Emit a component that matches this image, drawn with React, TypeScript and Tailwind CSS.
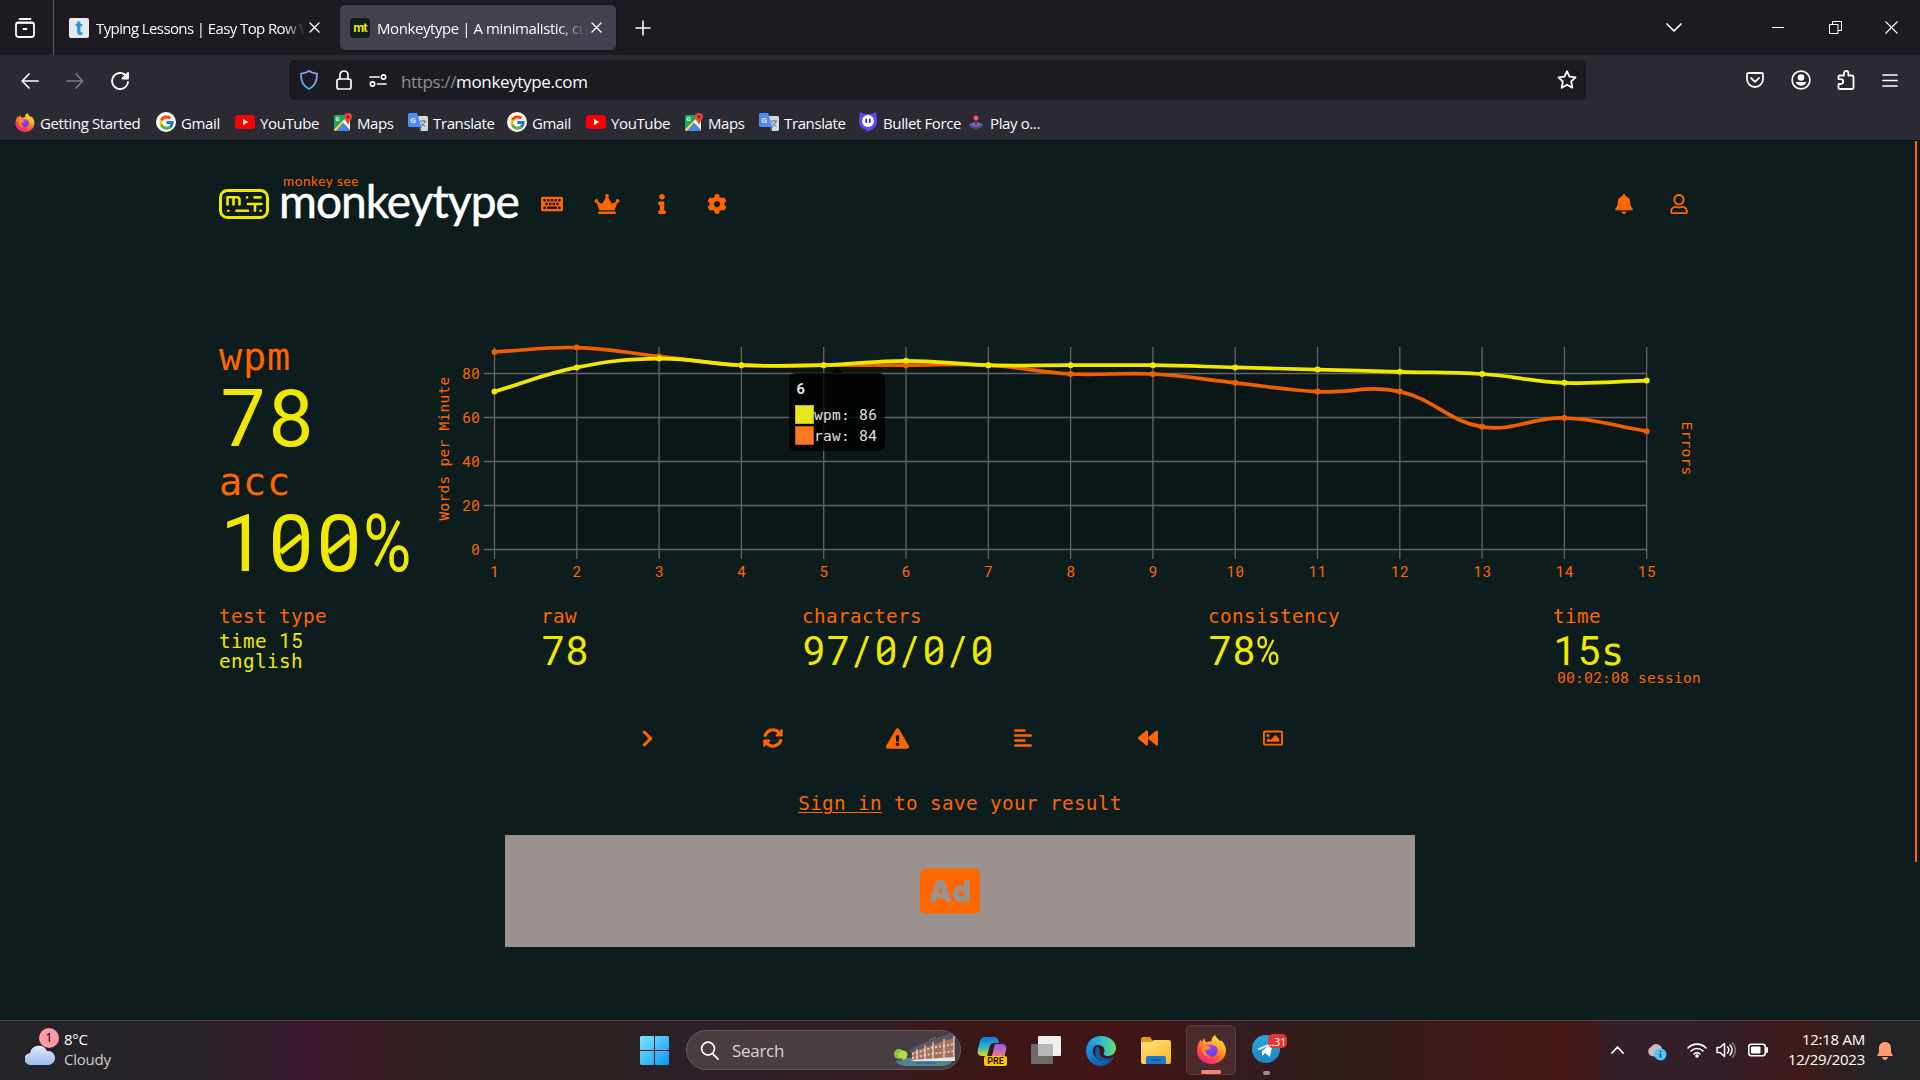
import React from "react";
import {
  FaKeyboard, FaCrown, FaInfo, FaCog, FaBell, FaRegUser, FaChevronRight, FaSyncAlt,
  FaExclamationTriangle, FaAlignLeft, FaBackward, FaRegImage, FaAd,
} from "react-icons/fa";
import { FcGoogle } from "react-icons/fc";

/* ---------- monospace text with slashed zeros ---------- */

function Mono({ text }: { text: string }) {
  const parts = text.match(/[0-9/%]|[^0-9/%]+/g) ?? [];
  return (
    <>
      {parts.map((p, i) =>
        /^[0-9/%]$/.test(p) ? (
          <span key={i} className="relative inline-flex w-[0.6em] justify-center font-['Roboto',sans-serif] leading-[0]">
            {p === "%" ? <span className="scale-x-[0.82]">%</span> : p}
            {p === "0" && (
              <svg viewBox="0 0 60 72" className="absolute bottom-[-0.35em] left-0 h-[0.72em] w-[0.6em] overflow-visible" fill="none">
                <path d="M17 48L43 27" stroke="currentColor" strokeWidth="7" />
              </svg>
            )}
          </span>
        ) : (
          <span key={i} className="font-['DejaVu_Sans_Mono',monospace] text-[0.965em] leading-[0] tracking-[0.0197em]">{p}</span>
        )
      )}
    </>
  );
}

/* ---------- browser icons ---------- */

function FirefoxLogo({ className }: { className: string }) {
  return (
    <svg viewBox="0 0 32 32" className={className}>
      <defs>
        <linearGradient id="ffa" x1="0.8" y1="0" x2="0.2" y2="1">
          <stop offset="0" stopColor="#fff04a" />
          <stop offset="0.4" stopColor="#ff9a25" />
          <stop offset="0.7" stopColor="#ff4a45" />
          <stop offset="1" stopColor="#e8159a" />
        </linearGradient>
        <linearGradient id="ffb" x1="0.3" y1="0" x2="0.7" y2="1">
          <stop offset="0" stopColor="#a34bff" />
          <stop offset="1" stopColor="#5b3fe0" />
        </linearGradient>
      </defs>
      <path d="M20 0c1 3 4 5 6 7l1-1c3 3 5 7 5 11 0 8-7 15-16 15S0 26 0 17c0-5 2-9 4-12l1 3 3-5c0 2 1 4 3 5 2-1 4-1 5-1 0-3 1-5 4-7z" fill="url(#ffa)" />
      <path d="M10 12c3-2 10-2 12 2 2 5-1 10-6 10-5 0-8-4-7-8 2 1 5 0 6-2-2 0-4-1-5-2z" fill="url(#ffb)" />
      <path d="M8 9c1 2 4 4 7 4-1 3-4 3-6 3 0 4 3 7 7 8-6 1-11-4-11-9 0-2 1-5 3-6z" fill="#ff8a20" />
    </svg>
  );
}

function GoogleIcon() {
  return (
    <span className="flex h-5 w-5 items-center justify-center rounded-full bg-white">
      <FcGoogle className="h-[17px] w-[17px]" />
    </span>
  );
}

function YouTubeIcon() {
  return (
    <svg viewBox="0 0 20 14" className="h-[14px] w-5">
      <rect width="20" height="14" rx="3.5" fill="#f00" />
      <path d="M8 4l5.2 3L8 10z" fill="#fff" />
    </svg>
  );
}

function MapsIcon() {
  return (
    <svg viewBox="0 0 20 20" className="h-5 w-5">
      <rect x="1" y="3" width="16" height="16" rx="1.5" fill="#1fa463" />
      <path d="M1 17L15 4l2 3v10L9 10z" fill="#eceff1" />
      <path d="M1 17.5L9.5 9 11 10.500 3 19H2z" fill="#fdd835" />
      <path d="M3 19l7-8 7 8z" fill="#4285f4" />
      <path d="M10 10l1-1 6 7v2z" fill="#fff" />
      <text x="2.500" y="8.500" fontSize="6" fontFamily="Roboto" fontWeight="700" fill="#fff">G</text>
      <path d="M15 1a4 4 0 0 1 4 4c0 3-3 4-4 8-1-4-4-5-4-8a4 4 0 0 1 4-4z" fill="#ea4335" />
      <circle cx="15" cy="5" r="1.4" fill="#7b1a12" />
    </svg>
  );
}

function TranslateIcon() {
  return (
    <svg viewBox="0 0 20 20" className="h-5 w-5">
      <path d="M8 4h10.500A1.500 1.500 0 0 1 20 5.500v12a1.500 1.500 0 0 1-1.500 1.500H13z" fill="#d5d9dc" />
      <path d="M12 9h6M15 8v1M17 9c-.5 3-2.500 4.500-4 5.500M13.500 10.500c1 2 2.500 3.500 4 4" stroke="#607080" strokeWidth="1" fill="none" />
      <path d="M1.500 1H9l4.500 14h-12A1.500 1.500 0 0 1 0 13.500v-11A1.500 1.500 0 0 1 1.500 1z" fill="#4d8cf5" />
      <path d="M10.500 15h3L12 19z" fill="#2f5fc4" />
      <text x="2.600" y="11" fontSize="8" fontFamily="Roboto" fontWeight="700" fill="#e3edff">G</text>
    </svg>
  );
}

function BulletForceIcon() {
  return (
    <svg viewBox="0 0 18 20" className="h-5 w-[18px]">
      <path d="M1 0l4 2h8l4-2 1 9c0 5-3 8-6 9l-5 2 1-2C3 17 0 14 0 9z" fill="#6842ff" />
      <circle cx="9" cy="9" r="6" fill="#fff" />
      <path d="M7.200 7.500v2.500M10.800 7.500v2.500" stroke="#3a1fc0" strokeWidth="1.800" strokeLinecap="round" />
    </svg>
  );
}

function JoystickIcon() {
  return (
    <svg viewBox="0 0 14 14" className="h-[15px] w-[14px]">
      <path d="M0 9l7-3 7 3v2l-7 3-7-3z" fill="#4c4486" />
      <path d="M0 9l7-3 7 3-7 3z" fill="#7166ad" />
      <path d="M7 3v6" stroke="#33294f" strokeWidth="1.500" />
      <circle cx="7" cy="2.500" r="2.500" fill="#ff4d6a" />
    </svg>
  );
}

type StrokeProps = { className: string; box?: string; w?: number; children: React.ReactNode };
function Stroke({ className, box = "0 0 20 20", w = 1.6, children }: StrokeProps) {
  return (
    <svg viewBox={box} className={className} fill="none" stroke="currentColor" strokeWidth={w} strokeLinecap="round" strokeLinejoin="round">
      {children}
    </svg>
  );
}

const Cross = () => (
  <Stroke className="h-[11px] w-[11px]" box="0 0 11 11" w={1.4}><path d="M1 1l9 9M10 1l-9 9" /></Stroke>
);

/* ---------- browser chrome ---------- */

function TabStrip() {
  return (
    <div className="flex h-[55px] items-center bg-[#1c1b22] text-[#fbfbfe]">
      <div className="flex h-full w-[54px] items-center border-r border-[#5b5a62] pl-[15px]">
        <Stroke className="h-5 w-5" w={1.8}>
          <path d="M4.500 1h11" /><rect x="1" y="4.500" width="18" height="14.500" rx="2.500" /><path d="M2 4.800h16M8.500 11h3" />
        </Stroke>
      </div>
      <div className="flex h-[45px] w-[276px] items-center pl-[15px]">
        <span className="flex h-5 w-5 items-center justify-center rounded-[2px] bg-[#e9eaec] font-['Roboto',sans-serif] text-[20px] font-black leading-none text-[#2b95e0]">t</span>
        <span className="ml-[7px] w-[209px] overflow-hidden whitespace-nowrap pt-[1px] text-[15px] tracking-[-0.6px] [mask-image:linear-gradient(to_right,black_90%,transparent)]">Typing Lessons | Easy Top Row W</span>
        <span className="ml-[4px]"><Cross /></span>
      </div>
      <div className="ml-[10px] flex h-[45px] w-[276px] items-center rounded-[5px] bg-[#42414d] pl-[10px] shadow-[0_0_3px_rgba(0,0,0,0.5)]">
        <span className="flex h-[25px] w-5 items-center">
          <span className="flex h-5 w-5 items-center justify-center rounded-[4px] bg-[#0d1c1c] font-['Inter',sans-serif] text-[12px] font-bold leading-none tracking-[-0.8px] text-[#f0e800]">mt</span>
        </span>
        <span className="ml-[7px] w-[210px] overflow-hidden whitespace-nowrap pt-[1px] text-[15px] tracking-[-0.42px] [mask-image:linear-gradient(to_right,black_86%,transparent)]">Monkeytype | A minimalistic, cus</span>
        <span className="ml-[4px]"><Cross /></span>
      </div>
      <Stroke className="ml-[19px] h-4 w-4" box="0 0 16 16" w={1.6}><path d="M8 1v14M1 8h14" /></Stroke>
      <div className="ml-auto flex items-center pr-[22px]">
        <Stroke className="h-[9px] w-4" box="0 0 16 9" w={1.7}><path d="M1 1l7 7 7-7" /></Stroke>
        <svg className="ml-[90px] h-3 w-3" viewBox="0 0 12 12"><path d="M0 5.500h12" stroke="#fff" /></svg>
        <svg className="ml-[45px] h-[13px] w-[13px]" viewBox="0 0 13 13" fill="none" stroke="#fff"><path d="M.5 3.500h8.500v9h-8.500zM3.500 3.500v-3h9v9h-3.500" /></svg>
        <svg className="ml-[43px] h-[13px] w-[13px]" viewBox="0 0 13 13" stroke="#fff" strokeWidth="1.100"><path d="M.5.5l12 12M12.500.5l-12 12" /></svg>
      </div>
    </div>
  );
}

function Toolbar() {
  return (
    <div className="flex h-[50px] items-center bg-[#2b2a33] text-[#fbfbfe]">
      <div className="flex w-[289px] items-center pl-[21px] pt-[1px]">
        <Stroke className="h-[18px] w-[18px]" box="0 0 18 18" w={1.7}><path d="M17 9H1.500M8 2L1.200 9 8 16" /></Stroke>
        <Stroke className="ml-[27px] h-[18px] w-[18px] text-[#7b7a82]" box="0 0 18 18" w={1.7}><path d="M1 9h15.500M10 2l6.800 7-6.800 7" /></Stroke>
        <Stroke className="ml-[27px] h-[18px] w-[18px]" box="0 0 18 18" w={1.9}><path d="M16.500 6A8 8 0 1 0 17 10M17 1v5.500h-5.500z" /></Stroke>
      </div>
      <div className="flex h-10 w-[1297px] items-center rounded-[5px] bg-[#1c1b22] pl-[11px] pr-[9px]">
        <svg viewBox="0 0 18 20" className="h-5 w-[18px]" fill="none">
          <defs><linearGradient id="sh" x1="0.2" y1="1" x2="0.800" y2="0"><stop offset="0" stopColor="#2bc0ff" /><stop offset="1" stopColor="#a99bff" /></linearGradient></defs>
          <path d="M9 1c2.500 1.600 5 2.300 8 2.600C17.300 11 15 16 9 19 3 16 .7 11 1 3.600 4 3.300 6.500 2.600 9 1z" stroke="url(#sh)" strokeWidth="1.700" strokeLinejoin="round" />
        </svg>
        <Stroke className="ml-[18px] h-5 w-4" box="0 0 16 20" w={1.7}><rect x="1" y="9" width="14" height="10" rx="2" /><path d="M4 9V5a4 4 0 0 1 8 0v4" /></Stroke>
        <Stroke className="ml-[17px] h-[13px] w-[18px]" box="0 0 18 13" w={1.7}><path d="M1 3h9M8.500 10H17" /><circle cx="14.500" cy="3" r="2.200" /><circle cx="3.500" cy="10" r="2.200" /></Stroke>
        <span className="ml-[14px] whitespace-nowrap pt-[3px] text-[17px] tracking-[-0.36px] text-[#fbfbfe]"><span className="text-[#8f8e96]">https://</span>monkeytype.com</span>
        <Stroke className="ml-auto h-5 w-5" w={1.8}><path d="M10 1.200l2.500 5.400 6 .8-4.300 4.100 1.100 6.200-5.300-3-5.300 3 1.100-6.200L1.500 7.400l6-.8z" /></Stroke>
      </div>
      <div className="ml-[160px] flex items-center">
        <Stroke className="h-4 w-[18px]" box="0 0 18 16" w={1.8}><path d="M2.500 1h13A1.500 1.500 0 0 1 17 2.500V7a8 8 0 0 1-16 0V2.500A1.500 1.500 0 0 1 2.500 1zM5 6l4 3.800L13 6" /></Stroke>
        <svg className="ml-[27px] h-5 w-5" viewBox="0 0 20 20"><circle cx="10" cy="10" r="8.900" fill="none" stroke="#fbfbfe" strokeWidth="1.700" /><circle cx="10" cy="7.500" r="3.300" fill="#fbfbfe" /><path d="M4.800 12h10.400c-.6 2.600-2.700 3.800-5.200 3.800S5.400 14.600 4.800 12z" fill="#fbfbfe" /></svg>
        <Stroke className="ml-[26px] h-5 w-[18px]" box="0 0 18 20" w={1.8}><path d="M1.500 8.500v-2a1 1 0 0 1 1-1H7V3.200a2.200 2.200 0 0 1 4.400 0v2.300H15a1.500 1.500 0 0 1 1.500 1.500v10.500A1.500 1.500 0 0 1 15 19H2.500a1 1 0 0 1-1-1v-4h2.300a2.200 2.200 0 0 0 0-4.800H1.500z" /></Stroke>
        <Stroke className="ml-[27px] h-[15px] w-4" box="0 0 16 15" w={1.7}><path d="M1 2h14M1 7.500h14M1 13h14" /></Stroke>
      </div>
    </div>
  );
}

const bookmarks = [
  { label: "Getting Started", icon: <FirefoxLogo className="h-[19px] w-5" />, cls: "w-[141px] gap-[5px]" },
  { label: "Gmail", icon: <GoogleIcon />, cls: "w-[79px] gap-[5px]" },
  { label: "YouTube", icon: <YouTubeIcon />, cls: "w-[98px] gap-[5px]" },
  { label: "Maps", icon: <MapsIcon />, cls: "w-[75px] gap-[4px]" },
  { label: "Translate", icon: <TranslateIcon />, cls: "w-[99px] gap-[5px]" },
  { label: "Gmail", icon: <GoogleIcon />, cls: "w-[79px] gap-[5px]" },
  { label: "YouTube", icon: <YouTubeIcon />, cls: "w-[98px] gap-[5px]" },
  { label: "Maps", icon: <MapsIcon />, cls: "w-[75px] gap-[4px]" },
  { label: "Translate", icon: <TranslateIcon />, cls: "w-[100px] gap-[5px]" },
  { label: "Bullet Force", icon: <BulletForceIcon />, cls: "w-[110px] gap-[6px]" },
  { label: "Play o...", icon: <JoystickIcon />, cls: "w-[80px] gap-[7px]" },
];

function BookmarksBar() {
  return (
    <div className="flex h-9 items-center border-b border-[#08080a] bg-[#2b2a33] pb-[1px] pl-[15px] text-[15px] tracking-[-0.38px] text-[#fbfbfe]">
      {bookmarks.map((b, i) => (
        <div key={i} className={"flex shrink-0 items-center whitespace-nowrap " + b.cls}>
          {b.icon}
          <span className="pt-[2px]">{b.label}</span>
        </div>
      ))}
    </div>
  );
}

/* ---------- page ---------- */

function Header() {
  return (
    <header className="flex h-[126px] items-center pl-[219px] pr-[219px] text-[#ff6600]">
      <svg viewBox="0 0 50 30" className="h-[30px] w-[50px]" fill="none" stroke="#f0e800" strokeWidth="3" strokeLinecap="round" strokeLinejoin="round">
        <rect x="1.500" y="1.500" width="47" height="27" rx="7" />
        <path d="M8.500 15.500V8.200h9.500a2.500 2.500 0 0 1 2.500 2.500v4.800M14.500 8.500v7M28 8.400h.1M35.500 8.400h6M29 15h13.500M36 15v6.700M9.200 21.800h.1M17.500 21.800h11.500M41.500 21.800h.1" strokeWidth="2.600" />
      </svg>
      <div className="ml-[10px] flex w-[242px] flex-col whitespace-nowrap font-['Lato',sans-serif]">
        <span className="-mt-[14px] ml-[4px] h-[7px] text-[13.5px] leading-[12px] tracking-[0.6px]">monkey see</span>
        <span className="h-[38px] text-[46px] leading-[38px] tracking-[-0.95px] text-white [-webkit-text-stroke:0.5px_white]">monkeytype</span>
      </div>
      <nav className="ml-[20px] flex items-center">
        <FaKeyboard className="h-[20px] w-[22px]" />
        <FaCrown className="ml-[31px] h-[20px] w-[26px]" />
        <FaInfo className="ml-[32px] h-[20px] w-5" />
        <FaCog className="ml-[35px] h-[20px] w-5" />
      </nav>
      <div className="ml-auto flex items-center gap-[36px] pr-[13px]">
        <FaBell className="h-5 w-5" />
        <FaRegUser className="h-5 w-[18px]" />
      </div>
    </header>
  );
}

const wpm = [72, 83, 87, 84, 84, 86, 84, 84, 84, 83, 82, 81, 80, 76, 77];
const raw = [90, 92, 88, 84, 84, 84, 84, 80, 80, 76, 72, 72, 56, 60, 54];
const px = (i: number) => 64.5 + i * 82.3;
const py = (v: number) => 209.5 - v * 2.2;

function spline(data: number[]) {
  const pts = data.map((v, i) => ({ x: px(i), y: py(v) }));
  const ctl = pts.map((c, i) => {
    const a = pts[i - 1] ?? c;
    const b = pts[i + 1] ?? c;
    const d01 = Math.hypot(c.x - a.x, c.y - a.y);
    const d12 = Math.hypot(b.x - c.x, b.y - c.y);
    const fa = (0.4 * d01) / (d01 + d12);
    const fb = (0.4 * d12) / (d01 + d12);
    return {
      px: c.x - fa * (b.x - a.x), py: c.y - fa * (b.y - a.y),
      nx: c.x + fb * (b.x - a.x), ny: c.y + fb * (b.y - a.y),
    };
  });
  return pts.map((p, i) => i === 0 ? `M${p.x} ${p.y}` : `C${ctl[i - 1].nx} ${ctl[i - 1].ny} ${ctl[i].px} ${ctl[i].py} ${p.x} ${p.y}`).join("");
}

/* Tick label drawn on a 9px character grid. */
function Digits({ x, y, text, fill = "#ff6600" }: { x: number; y: number; text: string; fill?: string }) {
  return (
    <g>
      <text x={x + 0.3} y={y} fontSize="15" fontFamily="Roboto, sans-serif" letterSpacing="0.58" fill={fill}>{text}</text>
      {text.split("").map((c, i) => c === "0" ? <path key={i} d={`M${x + i * 9 + 2.6} ${y - 3.600}l3.900 -3.400`} stroke={fill} strokeWidth="1.100" /> : null)}
    </g>
  );
}

function Chart() {
  const wpmPath = spline(wpm);
  return (
    <svg viewBox="0 0 1275 250" className="h-[250px] w-[1275px] overflow-visible" fontFamily="'DejaVu Sans Mono', monospace" fontSize="14.5" letterSpacing="0.27">
      <path d={`${wpmPath}L${px(14)} 209.500L${px(0)} 209.500Z`} fill="#0b1616" />
      <g stroke="#646464" strokeWidth="1.300">
        {[0, 20, 40, 60, 80].map((v) => <path key={v} d={`M54 ${py(v)}H${px(14)}`} />)}
        {raw.map((_, i) => <path key={i} d={`M${px(i)} 7V219`} />)}
      </g>
      <g transform="translate(0 0.5)">
        <g fill="none" strokeWidth="3.700" strokeLinejoin="round">
          <path d={spline(raw)} stroke="#ed5f00" />
          <path d={wpmPath} stroke="#f0e800" />
        </g>
        {raw.map((v, i) => <circle key={i} cx={px(i)} cy={py(v)} r="3" fill="#ed5f00" />)}
        {wpm.map((v, i) => <circle key={i} cx={px(i)} cy={py(v)} r="3" fill="#f0e800" />)}
      </g>
      {[0, 20, 40, 60, 80].map((v) => <Digits key={v} x={v === 0 ? 41 : 32} y={py(v) + 5} text={String(v)} />)}
      {raw.map((_, i) => <Digits key={i} x={px(i) - (i > 8 ? 9 : 4.5)} y={237} text={String(i + 1)} />)}
      <text transform="translate(18.800 108.500) rotate(-90)" textAnchor="middle" fill="#ff6600">Words per Minute</text>
      <text transform="translate(1252 108.500) rotate(90)" textAnchor="middle" fill="#ff6600">Errors</text>
      <g>
        <path d="M365 33h36l6-6 6 6h36a6 6 0 0 1 6 6v66a6 6 0 0 1-6 6H365a6 6 0 0 1-6-6V39a6 6 0 0 1 6-6z" fill="#000" fillOpacity="0.78" />
        <text x="366.500" y="54" fontSize="14.500" fontFamily="Roboto, sans-serif" fontWeight="700" fill="#e0e0e0">6</text>
        <rect x="365.500" y="65.500" width="18" height="18" fill="#eae61e" stroke="#c2bb04" />
        <rect x="365.500" y="86.500" width="18" height="18" fill="#fb7922" stroke="#c95608" />
        <text x="384" y="80" fill="#e0e0e0">wpm:</text>
        <Digits x={429} y={80} text="86" fill="#e0e0e0" />
        <text x="384" y="100.500" fill="#e0e0e0">raw:</text>
        <Digits x={429} y={100.5} text="84" fill="#e0e0e0" />
      </g>
    </svg>
  );
}

function Detail({ label, value }: { label: string; value: string }) {
  return (
    <div>
      <div className="text-[20px] leading-none"><Mono text={label} /></div>
      <div className="mt-[7px] text-[40px] leading-none text-[#f0e800]"><Mono text={value} /></div>
    </div>
  );
}

function Results() {
  return (
    <main className="flex flex-col whitespace-pre font-['Liberation_Mono',monospace] text-[#ff6600]">
      <div className="flex h-[268px] pl-[219px] pt-[73px]">
        <div className="w-[211px] shrink-0">
          <div className="text-[40px] leading-none"><Mono text="wpm" /></div>
          <div className="mt-[5px] text-[80px] leading-none text-[#f0e800]"><Mono text="78" /></div>
          <div className="text-[40px] leading-none"><Mono text="acc" /></div>
          <div className="mt-[5px] text-[80px] leading-none text-[#f0e800]"><Mono text="100%" /></div>
        </div>
        <div className="h-[250px]"><Chart /></div>
      </div>
      <div className="mt-[73px] grid h-[85px] grid-cols-[322px_261px_406px_345px_160px] pl-[219px]">
        <div>
          <div className="text-[20px] leading-none"><Mono text="test type" /></div>
          <div className="mt-[5px] text-[20px] leading-none text-[#f0e800]"><Mono text="time 15" /></div>
          <div className="text-[20px] leading-none text-[#f0e800]"><Mono text="english" /></div>
        </div>
        <Detail label="raw" value="78" />
        <Detail label="characters" value="97/0/0/0" />
        <Detail label="consistency" value="78%" />
        <div>
          <Detail label="time" value="15s" />
          <div className="-mt-[3px] pl-[4px] text-[15px] leading-none"><Mono text="00:02:08 session" /></div>
        </div>
      </div>
      <div className="mt-[25px] flex h-10 items-center justify-center text-[20px]">
        <div className="flex w-[125px] justify-center"><FaChevronRight className="h-[19px] w-[13px]" /></div>
        <div className="flex w-[125px] justify-center"><FaSyncAlt /></div>
        <div className="flex w-[125px] justify-center"><FaExclamationTriangle className="h-[21px] w-[23px]" /></div>
        <div className="flex w-[125px] justify-center"><FaAlignLeft /></div>
        <div className="flex w-[125px] justify-center"><FaBackward /></div>
        <div className="flex w-[125px] justify-center"><FaRegImage /></div>
      </div>
      <div className="mt-[37px] text-center text-[20px] leading-none"><span className="underline decoration-1 underline-offset-2"><Mono text="Sign in" /></span><Mono text=" to save your result" /></div>
      <div className="mx-auto mt-[20px] flex h-[112px] w-[910px] items-center justify-center bg-[#9b918f] pr-[20px]">
        <FaAd className="h-[60px] w-[60px]" />
      </div>
    </main>
  );
}

/* ---------- taskbar ---------- */

function Taskbar() {
  return (
    <footer className="flex h-[60px] items-center border-t border-[#4d4142] bg-[linear-gradient(90deg,#232327_0px,#28232a_190px,#3a172b_310px,#351b1f_400px,#2b2020_480px,#2a2121_620px,#2d202b_700px,#341c22_860px,#3a1818_960px,#431416_1100px,#341b1d_1240px,#301c1b_1340px,#451712_1560px,#33202b_1620px,#331d29_1720px,#401a1b_1800px,#232325_1880px,#232325_1920px)] text-white">
      <div className="flex w-[640px] items-center pl-[25px]">
        <div className="relative -mt-[6px] h-10 w-[35px]">
          <svg viewBox="0 0 30 24" className="absolute bottom-[3px] left-0 h-6 w-[30px]">
            <defs><linearGradient id="cl" x1="0" y1="0" x2="0" y2="1"><stop offset="0" stopColor="#dfe9fa" /><stop offset="1" stopColor="#9dbdf0" /></linearGradient></defs>
            <path d="M6 24a6 6 0 0 1-1-12 9 9 0 0 1 17-2 7 7 0 0 1 2 14z" fill="url(#cl)" />
          </svg>
          <span className="absolute left-[14px] top-0 flex h-5 w-5 items-center justify-center rounded-full bg-[#ff99a4] text-[13px] text-black">1</span>
        </div>
        <div className="-mt-[4px] ml-[4px] text-[15px] leading-[20px] tracking-[-0.25px]">
          <div>8°C</div>
          <div className="text-[#cfcccf]">Cloudy</div>
        </div>
      </div>
      <svg viewBox="0 0 29 29" className="h-[29px] w-[29px]">
        <defs><linearGradient id="win" x1="0" y1="0" x2="1" y2="1"><stop offset="0" stopColor="#7ae7ff" /><stop offset="1" stopColor="#0f96f5" /></linearGradient></defs>
        <path d="M1 0h13v14H0V1zM15 0h13l1 1v13H15zM0 15h14v14H1l-1-1zM15 15h14v13l-1 1H15z" fill="url(#win)" />
      </svg>
      <div className="-mt-[1px] ml-[17px] flex h-10 w-[275px] items-center rounded-full border border-[#635a5e] bg-[#483e42] pl-[13px]">
        <Stroke className="h-[19px] w-[19px]" w={1.8}><circle cx="8.500" cy="8" r="6.800" /><path d="M13.500 13.500L19 19" /></Stroke>
        <span className="ml-[13px] pt-[1px] text-[17px] tracking-[-0.3px] text-[#d9d5d7]">Search</span>
        <svg viewBox="0 0 68 38" className="ml-auto mr-[2px] h-[38px] w-[68px]">
          <path d="M6 30c10-5 40-5 58-3-3 7-8 8-14 8H20c-8 0-12-1-14-5z" fill="#4f8790" />
          <path d="M22 18L40 10V8l6-2v2l15-5 3 1v25l-42 2z" fill="#a5715f" />
          <path d="M20 18L40 9l4-3 3 1 14-5 3 1v4L42 14 20 22z" fill="#5b5761" />
          <path d="M22 23l19-6 24-4M22 27l19-4 24-3" fill="none" stroke="#e9d5c4" strokeWidth="1.800" strokeDasharray="2 2" />
          <path d="M27 18v12M35 14v15M43 11v17M54 8v20M64 5v22" stroke="#ead9cb" strokeWidth="1.200" />
          <path d="M20 29l45-3v4H24z" fill="#e8e6e2" />
          <path d="M26 31h20v2H26z" fill="#3d6cb0" />
          <circle cx="9" cy="23" r="5" fill="#8ec53f" /><circle cx="13" cy="24" r="4.500" fill="#b6d94a" /><path d="M11 27v4" stroke="#6e4a2b" strokeWidth="1.500" />
        </svg>
      </div>
      <svg viewBox="0 0 30 30" className="ml-[16px] h-[30px] w-[30px]">
        <defs>
          <linearGradient id="cpa" x1="0" y1="0" x2="0" y2="1"><stop offset="0" stopColor="#1b6ff0" /><stop offset="0.500" stopColor="#25b8c8" /><stop offset="1" stopColor="#e8d326" /></linearGradient>
          <linearGradient id="cpb" x1="0" y1="0" x2="0" y2="1"><stop offset="0" stopColor="#8a5bf5" /><stop offset="1" stopColor="#ff7f6a" /></linearGradient>
        </defs>
        <path d="M8 1h9c3 0 4 2 5 6h-5c-3 0-4 2-5 6l-2 7H5c-4 0-5-3-4-7L3 5c1-3 2-4 5-4z" fill="url(#cpa)" />
        <path d="M18 8h7c4 0 5 3 4 6l-2 8H12c3 0 3-3 4-6z" fill="url(#cpb)" />
        <rect x="7" y="20" width="23" height="10" rx="2" fill="#ffc400" />
        <text x="18.500" y="28.200" textAnchor="middle" fontSize="9" fontWeight="700" fontFamily="Roboto" fill="#1c1500">PRE</text>
      </svg>
      <svg viewBox="0 0 30 28" className="-mt-[1px] ml-[24px] h-7 w-[30px]">
        <rect x="0" y="8" width="22" height="20" rx="1" fill="#6b6b6b" /><rect x="7" y="0" width="23" height="20" rx="1" fill="#f0f0f0" /><rect x="7" y="8" width="15" height="12" fill="#b8b8b8" />
      </svg>
      <svg viewBox="0 0 30 30" className="ml-[25px] h-[30px] w-[30px]">
        <defs>
          <linearGradient id="eda" x1="0" y1="0" x2="1" y2="0"><stop offset="0" stopColor="#1c8fe0" /><stop offset="0.600" stopColor="#30c3d0" /><stop offset="1" stopColor="#6fe05a" /></linearGradient>
          <linearGradient id="edb" x1="0" y1="0" x2="1" y2="1"><stop offset="0" stopColor="#1b9be8" /><stop offset="1" stopColor="#0c4a94" /></linearGradient>
        </defs>
        <path d="M0 14C1 5 7 0 15 0c9 0 15 6 15 12 0 5-4 8-8 8-3 0-5-1-4-3 2-4-1-8-6-8C6 9 1 11 0 14z" fill="url(#eda)" />
        <path d="M0 14c1-3 5-6 11-5-4 1-5 6-3 10 3 6 11 8 19 4-3 4-7 7-12 7C6 30 0 23 0 14z" fill="url(#edb)" />
        <path d="M12 10c-4 3-4 9 0 13 4 3 9 3 15 0 1-1 0-2-1-1-7 2-14-1-12-7z" fill="#0c59a4" />
      </svg>
      <svg viewBox="0 0 30 27" className="ml-[25px] h-[27px] w-[30px]">
        <defs><linearGradient id="fo" x1="0" y1="0" x2="1" y2="1"><stop offset="0" stopColor="#ffe083" /><stop offset="1" stopColor="#fbb91e" /></linearGradient></defs>
        <path d="M0 2a2 2 0 0 1 2-2h7l3 4h16v8H0z" fill="#e39a10" />
        <path d="M0 5h10l3-2h15a2 2 0 0 1 2 2v20a2 2 0 0 1-2 2H2a2 2 0 0 1-2-2z" fill="url(#fo)" />
        <path d="M5 27v-6a2 2 0 0 1 2-2h16a2 2 0 0 1 2 2v6z" fill="#1879cf" /><path d="M10 23h10" stroke="#0c4f94" strokeWidth="1.500" />
      </svg>
      <div className="-mt-[1px] ml-[15px] flex h-[50px] w-[50px] flex-col items-center justify-between rounded-[5px] border border-[#5a3a3b] bg-[#4a2b2d] pt-[9px]">
        <FirefoxLogo className="h-[29px] w-[29px]" />
        <span className="h-1 w-5 rounded-full bg-[#f5846b]" />
      </div>
      <div className="relative -mt-[1px] ml-[15px] flex h-[50px] w-[36px] flex-col items-center justify-between pt-[10px]">
        <svg viewBox="0 0 28 28" className="-ml-[6px] h-7 w-7">
          <defs><linearGradient id="tg" x1="0" y1="0" x2="0" y2="1"><stop offset="0" stopColor="#2ba6df" /><stop offset="1" stopColor="#1b83c4" /></linearGradient></defs>
          <circle cx="14" cy="14" r="14" fill="url(#tg)" /><path d="M5 14l16-7-3 15-5-4-3 3v-5l7-6-9 5z" fill="#fff" />
        </svg>
        <span className="-ml-[6px] h-1 w-[7px] rounded-full bg-[#9d8f92]" />
        <span className="absolute left-[17px] top-[9px] flex h-[14px] w-[19px] items-center justify-center rounded-[5px] bg-[#e5352f] text-[11px] leading-none tracking-[-0.3px]">..31</span>
      </div>
      <div className="ml-auto flex items-center pr-[27px]">
        <Stroke className="-mt-[2px] mr-[-1px] h-2 w-[13px]" box="0 0 13 8" w={1.7}><path d="M1 7l5.500-6L12 7" /></Stroke>
        <svg viewBox="0 0 21 18" className="ml-[23px] mt-[3px] h-[18px] w-[21px]">
          <path d="M5 13a5 5 0 0 1 0-9 6 6 0 0 1 11 2l-4 8z" fill="#c5bcc2" /><circle cx="14.500" cy="11.500" r="6" fill="#4cc2ff" />
          <path d="M14.500 10.500v4M14.500 8v1" stroke="#10324a" strokeWidth="1.500" />
        </svg>
        <Stroke className="-mt-[2px] ml-[20px] h-4 w-5" box="0 0 20 16" w={1.6}><path d="M1 6a12.500 12.500 0 0 1 18 0M4 9a8.500 8.500 0 0 1 12 0M7 12a4.500 4.500 0 0 1 6 0" /><circle cx="10" cy="14" r="1" fill="currentColor" /></Stroke>
        <Stroke className="-mt-[2px] ml-[9px] h-4 w-5" box="0 0 20 16" w={1.5}><path d="M1 5.500h3L8.500 1.500v13L4 10.500H1zM11.500 5a4 4 0 0 1 0 6M14 3a7 7 0 0 1 0 10" /><path d="M16.500 1a10 10 0 0 1 0 14" stroke="#8b7d84" /></Stroke>
        <svg viewBox="0 0 21 13" className="-mt-[2px] ml-[12px] h-[14px] w-[21px]"><rect x="0.800" y="0.800" width="16.400" height="11.400" rx="2.500" fill="none" stroke="#fff" strokeWidth="1.500" /><rect x="3" y="3" width="9.500" height="7" rx="1" fill="#fff" /><path d="M19 4.500v4" stroke="#fff" strokeWidth="2" strokeLinecap="round" /></svg>
        <div className="-mt-[4px] ml-[8px] w-[88px] whitespace-nowrap text-right text-[15px] leading-[20px] tracking-[-0.25px]">
          <div>12:18 AM</div>
          <div>12/29/2023</div>
        </div>
        <svg viewBox="0 0 16 18" className="ml-[12px] h-[18px] w-4" fill="#ff9b73"><path d="M8 0c3.600 0 6 2.600 6 6v4l2 4H0l2-4V6c0-3.400 2.400-6 6-6zM5 15h6c-.4 1.800-1.500 3-3 3s-2.600-1.200-3-3z" /></svg>
      </div>
    </footer>
  );
}

export default function App() {
  return (
    <div className="flex h-[1080px] w-[1920px] flex-col overflow-hidden bg-[#0d1c1c] font-['Open_Sans','Noto_Sans',sans-serif]">
      <TabStrip />
      <Toolbar />
      <BookmarksBar />
      <div className="relative h-[879px]">
        <Header />
        <Results />
        <div className="absolute right-[3px] top-0 h-[721px] w-[2px] bg-[#ff6600]" />
      </div>
      <Taskbar />
    </div>
  );
}
